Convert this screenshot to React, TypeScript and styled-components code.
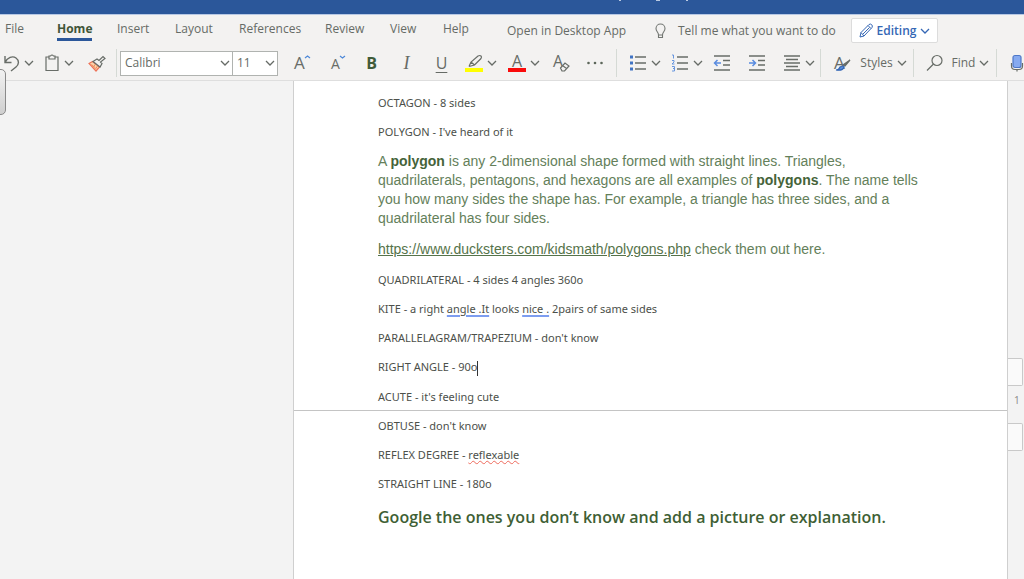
import React from "react";
import styled, { createGlobalStyle, css } from "styled-components";

const uiFont = '"Open Sans", "Noto Sans", sans-serif';
const docFont = '"Noto Sans", "Open Sans", sans-serif';

const GlobalStyle = createGlobalStyle`
  *, *::before, *::after { box-sizing: border-box; }
  body { margin: 0; background: #f3f3f3; color: #666b66; font: 12px/18px ${uiFont}; }
  button, select { font: inherit; color: inherit; }
`;

const Shell = styled.div`
  position: relative;
  display: flex;
  flex-direction: column;
  min-height: 100vh;
  overflow: hidden;
`;
const TitleBar = styled.header`
  height: 15px;
  flex: none;
  background: #2b579a;
  border-bottom: 1px solid #b7c8e4;
  svg { display: block; margin-left: 618px; }
`;
const Ribbon = styled.div`
  flex: none;
  background: #f3f2f1;
  border-bottom: 1px solid #dedede;
`;
const TabRow = styled.nav`
  display: flex;
  height: 31px;
  align-items: flex-start;
  padding-left: 5px;
  white-space: nowrap;
`;
const Tab = styled.button<{ $width: number; $active?: boolean }>`
  width: ${(p) => p.$width}px;
  height: 26px;
  padding: 5px 0 0;
  border: 0;
  background: none;
  text-align: left;
  line-height: 18px;
  span { display: inline-block; height: 21px; }
  ${(p) =>
    p.$active &&
    css`
      color: #3f5538;
      font-weight: 700;
      span { border-bottom: 3px solid #2b579a; }
    `}
`;
const TabAction = styled.button<{ $width: number }>`
  display: flex;
  align-items: center;
  gap: 11px;
  width: ${(p) => p.$width}px;
  height: 32px;
  padding: 0;
  border: 0;
  background: none;
`;
const EditingButton = styled.button`
  display: flex;
  align-items: center;
  justify-content: center;
  gap: 4px;
  width: 87px;
  height: 25px;
  margin-top: 3px;
  padding: 0;
  border: 1px solid #dcdcdc;
  border-radius: 2px;
  background: #fff;
  color: #3567b5;
  font-weight: 600;
`;
const Toolbar = styled.div`
  display: flex;
  align-items: center;
  height: 34px;
  white-space: nowrap;
`;
const Tool = styled.button<{ $width?: number }>`
  display: flex;
  flex: none;
  align-items: center;
  justify-content: center;
  gap: 4px;
  width: ${(p) => p.$width ?? 35}px;
  height: 32px;
  padding: 0;
  border: 0;
  background: none;
  svg { overflow: visible; }
`;
const Letter = styled.span<{ $kind: "bold" | "italic" | "underline" }>`
  font-size: 16px;
  line-height: 20px;
  ${(p) => p.$kind === "bold" && "color: #405b39; font-weight: 700;"}
  ${(p) => p.$kind === "italic" && 'font-family: "Liberation Serif", serif; font-style: italic; font-size: 18px;'}
  ${(p) => p.$kind === "underline" && "text-decoration: underline 1px; text-underline-offset: 3px;"}
`;
const Caption = styled.span`
  margin-left: 5px;
`;
const Divider = styled.span<{ $before?: number; $after?: number }>`
  flex: none;
  width: 1px;
  height: 28px;
  margin: 0 ${(p) => p.$after ?? 0}px 0 ${(p) => p.$before ?? 0}px;
  background: #d5dad5;
`;
const FontPickers = styled.div`
  display: flex;
  flex: none;
  margin-right: 6px;
`;
const Picker = styled.label<{ $width: number }>`
  position: relative;
  width: ${(p) => p.$width}px;
  & + & { margin-left: -1px; }
  select {
    display: block;
    width: 100%;
    height: 25px;
    padding: 0 4px;
    border: 1px solid #b0b3b0;
    border-radius: 0;
    background: #fff;
    appearance: none;
  }
  svg { position: absolute; right: 3px; top: 8px; pointer-events: none; }
`;
const Workspace = styled.main`
  display: grid;
  flex: 1;
  grid-template-columns: minmax(0, 1fr) minmax(0, 715px) 16px;
`;
const Sheet = styled.article`
  grid-column: 2;
  display: flex;
  flex-direction: column;
  gap: 12px;
  padding: 13px 84px 24px;
  border: solid #cfcfcf;
  border-width: 0 1px;
  background: #fff;
`;
const Line = styled.p`
  margin: 0;
  color: #4c504a;
  font: 11px/17px ${docFont};
`;
const Body = styled.p`
  margin: 0;
  color: #64805a;
  font: 14px/19px "Liberation Sans", Arial, sans-serif;
  b { color: #456339; }
  a { color: #55734a; }
`;
const Closing = styled.h1`
  margin: 0;
  color: #3f5f35;
  font: 600 16px/26px "Open Sans", sans-serif;
`;
const Grammar = styled.span`
  text-decoration: underline 2px #7d9df0;
  text-underline-offset: 2px;
`;
const Spelling = styled.span`
  text-decoration: underline wavy 1px #ee6a5c;
  text-underline-offset: 1px;
`;
const Caret = styled.span`
  display: inline-block;
  width: 1px;
  height: 15px;
  background: #333;
  vertical-align: middle;
`;
const PageBreak = styled.hr`
  align-self: stretch;
  height: 1px;
  margin: -7px -84px -6px;
  border: 0;
  background: #c4c4c4;
`;
const Rail = styled.aside`
  display: flex;
  flex-direction: column;
  align-items: flex-start;
  padding-top: 277px;
  font-size: 10px;
  line-height: 29px;
  color: #888;
  span { padding: 0 0 8px 6px; }
`;
const Handle = styled.button`
  width: 15px;
  height: 28px;
  padding: 0;
  border: 1px solid #c9c9c9;
  border-left: 0;
  border-radius: 0 2px 2px 0;
  background: #fafafa;
`;
const SideGrip = styled.button`
  position: absolute;
  left: -8px;
  top: 69px;
  width: 14px;
  height: 46px;
  padding: 0;
  border: 1px solid #8a8a8a;
  border-radius: 5px;
  background: linear-gradient(#f2f2f2, #cfcfcf);
`;

const Chevron = ({ color = "#666b66" }: { color?: string }) => (
  <svg width="10" height="8" viewBox="0 0 10 8" fill="none" stroke={color} strokeWidth="1.3" aria-hidden="true">
    <path d="M1 2l4 4 4-4" />
  </svg>
);
const Icon = ({ children, width = 18 }: { children: React.ReactNode; width?: number }) => (
  <svg width={width} height="20" viewBox={`0 0 ${width} 20`} fill="none" stroke="#686d68" strokeWidth="1.2" aria-hidden="true">
    {children}
  </svg>
);
const IconLetter = ({ x, y, size }: { x: number; y: number; size: number }) => (
  <text x={x} y={y} fontSize={size} fill="#686d68" stroke="none">A</text>
);

const tabs: [string, number][] = [
  ["File", 52], ["Home", 60], ["Insert", 58], ["Layout", 64], ["References", 86], ["Review", 65], ["View", 53], ["Help", 64],
];

export default function App() {
  return (
    <Shell>
      <GlobalStyle />
      <TitleBar>
        <svg width="80" height="2" viewBox="0 0 80 2" fill="#b9c9e2" aria-hidden="true">
          <path d="M1 0h2v1H1zM38 0h4v1h-4zM68 0h2v1h-2z" />
        </svg>
      </TitleBar>
      <Ribbon>
        <TabRow>
          {tabs.map(([name, width]) => (
            <Tab key={name} $width={width} $active={name === "Home"}>
              <span>{name}</span>
            </Tab>
          ))}
          <TabAction $width={147}>Open in Desktop App</TabAction>
          <TabAction $width={197}>
            <svg width="13" height="17" viewBox="0 0 13 17" fill="none" stroke="#737773" strokeWidth="1.1" aria-hidden="true">
              <path d="M4.500 12C4.500 9 2 8.500 2 5.500a4.500 4.500 0 0 1 9 0C11 8.500 8.500 9 8.500 12zM4.500 12v2.500h4V12" />
            </svg>
            Tell me what you want to do
          </TabAction>
          <EditingButton>
            <svg width="14" height="15" viewBox="0 0 14 15" fill="none" stroke="#3567b5" strokeWidth="1" aria-hidden="true">
              <path d="M1 14l1-4.500L10 1.500q1.500-1 2.700.2t.3 2.800L5 13zM2 9.500L5 13M9 2.500L12 5.500M4 11l6.500-6.500" />
            </svg>
            Editing
            <Chevron color="#3567b5" />
          </EditingButton>
        </TabRow>
        <Toolbar>
          <Tool $width={36} aria-label="Undo">
            <Icon>
              <path d="M3 3v6.500h6.500M3 9.500C5.500 4.500 10.500 2.500 14 5s3 6.500 0 9l-5 4" strokeWidth="1.400" />
            </Icon>
            <Chevron />
          </Tool>
          <Tool $width={46} aria-label="Paste">
            <Icon width={16}>
              <path d="M5 4H2v13.500h12V4h-3M5 3h1.500q1.500-2 3 0H11v3H5z" />
            </Icon>
            <Chevron />
          </Tool>
          <Tool $width={29} aria-label="Format painter">
            <Icon>
              <path d="M1 10.500l3.500-2 7 5.500-3.500 4z" fill="#fbd4ae" stroke="#ee7358" />
              <path d="M3.500 11.500l4 3.500M7.500 11l-2 3M9.500 13l-2 3" stroke="#f0905c" strokeWidth="1" />
              <path d="M5 8.500l7 5.500 2-3.500-1.500-1.500L17 5.500 15 3.500 11 7.500 9 6z" fill="#f3f2f1" />
            </Icon>
          </Tool>
          <Divider $before={5} $after={3} />
          <FontPickers>
            <Picker $width={113}>
              <select aria-label="Font"><option>Calibri</option></select>
              <Chevron />
            </Picker>
            <Picker $width={46}>
              <select aria-label="Font size"><option>11</option></select>
              <Chevron />
            </Picker>
          </FontPickers>
          <Tool aria-label="Grow font"><Icon><IconLetter x={1} y={16} size={17} /><path d="M12 5l2.500-2L17 5" stroke="#4d88d8" /></Icon></Tool>
          <Tool aria-label="Shrink font"><Icon><IconLetter x={3} y={16} size={14} /><path d="M12 3l2.500 2L17 3" stroke="#4d88d8" /></Icon></Tool>
          <Tool aria-label="Bold"><Letter $kind="bold">B</Letter></Tool>
          <Tool aria-label="Italic"><Letter $kind="italic">I</Letter></Tool>
          <Tool aria-label="Underline"><Letter $kind="underline">U</Letter></Tool>
          <Tool $width={44} aria-label="Highlight colour">
            <Icon><path d="M4 13.500l2-4.500 7-6q2-1 3 0t0 2.500L9.500 12 4 13.500M6 9l3.500 3" /><path d="M0 17h18" stroke="#ff0" strokeWidth="4" /></Icon>
            <Chevron />
          </Tool>
          <Tool $width={42} aria-label="Font colour">
            <Icon><IconLetter x={4} y={14} size={16} /><path d="M0 17h18" stroke="#fa0b0b" strokeWidth="4" /></Icon>
            <Chevron />
          </Tool>
          <Tool $width={32} aria-label="Clear formatting">
            <Icon><IconLetter x={1} y={14} size={16} /><path d="M8.500 15l4.500-5 4 3-4.500 5H10zM10.500 12.500l4 3" fill="#f3f2f1" /></Icon>
          </Tool>
          <Tool aria-label="More font options"><Icon><g fill="#5c665a" stroke="none"><circle cx="2.500" cy="10" r="1.300" /><circle cx="9" cy="10" r="1.300" /><circle cx="15.500" cy="10" r="1.300" /></g></Icon></Tool>
          <Divider $before={4} $after={7} />
          <Tool $width={42} aria-label="Bullets">
            <Icon><path d="M6 4h11M6 10h11M6 16h11" strokeWidth="1.500" /><path d="M1 4h3M1 10h3M1 16h3" stroke="#3f73c4" strokeWidth="3" /></Icon>
            <Chevron />
          </Tool>
          <Tool $width={42} aria-label="Numbering">
            <Icon><path d="M6 4h11M6 10h11M6 16h11" strokeWidth="1.500" /><path d="M1 2h1.500v3.500M1 7.500h2V9L1 11h2.500M1 13.500h2.500V18H1M2 15.500h1" stroke="#6796df" strokeWidth="1" /></Icon>
            <Chevron />
          </Tool>
          <Tool $width={28} aria-label="Decrease indent"><Icon><path d="M1 3h16M10 7.500h7M10 12h7M1 17h16" strokeWidth="1.500" /><path d="M8 10H1.500m3-3l-3 3 3 3" stroke="#5a8cdf" strokeWidth="1.500" /></Icon></Tool>
          <Tool $width={42} aria-label="Increase indent"><Icon><path d="M1 3h16M10 7.500h7M10 12h7M1 17h16" strokeWidth="1.500" /><path d="M1 10h6.500m-3-3l3 3-3 3" stroke="#5a8cdf" strokeWidth="1.500" /></Icon></Tool>
          <Tool $width={42} aria-label="Alignment">
            <Icon><path d="M1 3h16M3 6.500h12M1 10h16M3 13.500h12M1 17h16" strokeWidth="1.300" /></Icon>
            <Chevron />
          </Tool>
          <Divider $after={6} />
          <Tool $width={86}>
            <Icon>
              <IconLetter x={1} y={16} size={17} />
              <path d="M17 7l-5 6-2-1 7-5z" fill="#686d68" />
              <path d="M3 17q3 0 4-3 4-2 4 0-1 4-8 3z" fill="#5b8fdc" stroke="#3567b5" />
            </Icon>
            <Caption>Styles</Caption>
            <Chevron />
          </Tool>
          <Divider $after={4} />
          <Tool $width={78}>
            <Icon><circle cx="12" cy="7.500" r="5" /><path d="M8.500 11L2 17.500" /></Icon>
            <Caption>Find</Caption>
            <Chevron />
          </Tool>
          <Divider $after={11} />
          <Tool $width={18} aria-label="Dictate">
            <Icon><rect x="5" y="2.500" width="8" height="12" rx="2" fill="#86aaf0" stroke="#4d77c8" /><path d="M3.500 10v3q0 3.500 3.500 3.500h4q3.500 0 3.500-3.500v-3M9 16.500v2" /></Icon>
          </Tool>
        </Toolbar>
      </Ribbon>
      <Workspace>
        <Sheet>
          <Line>OCTAGON - 8 sides</Line>
          <Line>POLYGON - I've heard of it</Line>
          <Body>
            A <b>polygon</b> is any 2-dimensional shape formed with straight lines. Triangles, quadrilaterals, pentagons, and
            hexagons are all examples of <b>polygons</b>. The name tells you how many sides the shape has. For example, a
            triangle has three sides, and a quadrilateral has four sides.
          </Body>
          <Body>
            <a href="https://www.ducksters.com/kidsmath/polygons.php">https://www.ducksters.com/kidsmath/polygons.php</a> check
            them out here.
          </Body>
          <Line>QUADRILATERAL - 4 sides 4 angles 360o</Line>
          <Line>
            KITE - a right <Grammar>angle .It</Grammar> looks <Grammar>nice .</Grammar> 2pairs of same sides
          </Line>
          <Line>PARALLELAGRAM/TRAPEZIUM - don't know</Line>
          <Line>RIGHT ANGLE - 90o<Caret /></Line>
          <Line>ACUTE - it's feeling cute</Line>
          <PageBreak />
          <Line>OBTUSE - don't know</Line>
          <Line>REFLEX DEGREE - <Spelling>reflexable</Spelling></Line>
          <Line>STRAIGHT LINE - 180o</Line>
          <Closing>Google the ones you don’t know and add a picture or explanation.</Closing>
        </Sheet>
        <Rail>
          <Handle aria-label="Previous page" />
          <span>1</span>
          <Handle aria-label="Next page" />
        </Rail>
      </Workspace>
      <SideGrip aria-label="Open side panel" />
    </Shell>
  );
}
